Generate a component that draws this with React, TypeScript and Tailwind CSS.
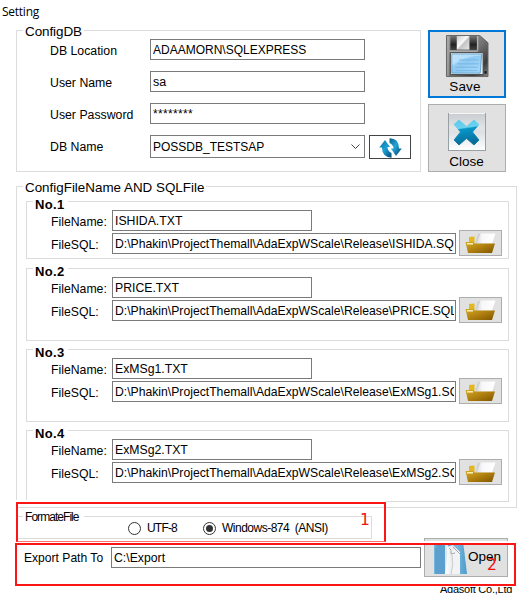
import type { ReactNode } from "react";

type GroupProps = { title: ReactNode; className: string; titleClass: string; children: ReactNode };

function Group({ title, className, titleClass, children }: GroupProps) {
  return (
    <section className={`relative border border-[#dcdcdc] ${className}`}>
      <h2 className={`absolute bg-white whitespace-nowrap ${titleClass}`}>{title}</h2>
      {children}
    </section>
  );
}

function Field({ value, className }: { value: string; className: string }) {
  return (
    <div className={`flex h-[21px] shrink-0 items-center border border-[#7a7a7a] bg-white pl-[2px] pr-[1px] pt-[2px] ${className}`}>
      <span className="block w-full overflow-hidden whitespace-pre leading-[17px]">{value}</span>
    </div>
  );
}

function FloppyIcon() {
  return (
    <svg width="44" height="44" viewBox="0 0 44 44">
      <defs>
        <linearGradient id="body" x1="0" y1="0" x2="1" y2="1">
          <stop offset="0" stopColor="#9b9b9b" />
          <stop offset=".5" stopColor="#777" />
          <stop offset=".8" stopColor="#3c3c3c" />
          <stop offset="1" stopColor="#858585" />
        </linearGradient>
        <linearGradient id="shutter" x1="0" y1="0" x2="1" y2="1">
          <stop offset="0" stopColor="#c9c9c9" />
          <stop offset=".45" stopColor="#fafafa" />
          <stop offset=".55" stopColor="#c4c4c4" />
          <stop offset="1" stopColor="#e6e6e6" />
        </linearGradient>
        <linearGradient id="dark" x1="0" y1="0" x2="0" y2="1">
          <stop offset="0" stopColor="#777" />
          <stop offset=".6" stopColor="#222" />
          <stop offset="1" stopColor="#444" />
        </linearGradient>
        <linearGradient id="label" x1="0" y1="0" x2="1" y2="1">
          <stop offset="0" stopColor="#b9e0fa" />
          <stop offset=".45" stopColor="#8fc9f2" />
          <stop offset="1" stopColor="#a9dbfb" />
        </linearGradient>
      </defs>
      <path d="M1 .5H35L43.5 8V42.5H1Z" fill="url(#body)" stroke="#666" />
      <path d="M2.500 1V42" stroke="#b5b5b5" />
      <path d="M5 1H32V15.500H5Z" fill="url(#dark)" />
      <path d="M11.500 1H24.500V15H11.500Z" fill="url(#shutter)" />
      <path d="M33 1V16M4 16.500H33" stroke="#c8c8c8" />
      <path d="M5 18H38.500V40.500H5Z" fill="#e8eef2" stroke="#474747" />
      <path d="M6.500 19.500H37L35.500 39H6.500Z" fill="url(#label)" stroke="#5093c3" strokeWidth=".8" />
      <path d="M7 31Q17 22 36.500 21V20H7Z" fill="#c2e5fb" opacity=".7" />
      <path d="M14 25.500H34M12 29.500H34M10 33H33M10 36.500H33" stroke="#6fb2e0" strokeWidth="1" opacity=".8" />
      <path d="M40 37h2v2.500h-2Z" fill="#111" />
    </svg>
  );
}

function CloseIcon() {
  return (
    <svg width="38" height="39" viewBox="0 0 38 39">
      <defs>
        <linearGradient id="tile" x1="0" y1="0" x2="0" y2="1">
          <stop offset="0" stopColor="#c9cdd1" />
          <stop offset=".4" stopColor="#e2e5e7" />
          <stop offset=".5" stopColor="#dce0e3" />
          <stop offset="1" stopColor="#fff" />
        </linearGradient>
        <linearGradient id="cross" gradientUnits="userSpaceOnUse" x1="0" y1="7" x2="4" y2="34">
          <stop offset="0" stopColor="#59c6e9" />
          <stop offset=".4" stopColor="#6dd1ef" />
          <stop offset=".45" stopColor="#0796c9" />
          <stop offset="1" stopColor="#086c99" />
        </linearGradient>
      </defs>
      <rect x=".5" y="1.500" width="37" height="37" fill="url(#tile)" stroke="#98a0a5" />
      <path d="M1 1.500H37" stroke="#f6f6f6" />
      <path
        d="M11 8L18.500 14.500L26 8L31 12.500L24.500 20L31 28L26 33L18.500 26.500L11 33L6 28L12.500 20L6 12.500Z"
        fill="url(#cross)"
        stroke="url(#cross)"
        strokeWidth=".8"
        strokeLinejoin="round"
      />
    </svg>
  );
}

function RefreshIcon() {
  return (
    <svg width="23" height="20" viewBox="0 0 23 20">
      <defs>
        <linearGradient id="arrowL" x1="0" y1="0" x2="1" y2="1">
          <stop offset="0" stopColor="#0b6fa3" />
          <stop offset=".5" stopColor="#19a0d5" />
          <stop offset="1" stopColor="#07466d" />
        </linearGradient>
        <linearGradient id="arrowR" x1="0" y1="0" x2="1" y2="1">
          <stop offset="0" stopColor="#0e5d88" />
          <stop offset=".45" stopColor="#21a5d9" />
          <stop offset="1" stopColor="#083b5d" />
        </linearGradient>
      </defs>
      <path d="M6 2L11 9H8.500Q8.500 13 12.500 15V19.800Q3 19 3 9.500H.3Z" fill="url(#arrowL)" />
      <path d="M10.500 .2Q20 0 20 10.500H22.800L17 18L12 10.500H14.500Q14.500 7 10.500 5Z" fill="url(#arrowR)" />
    </svg>
  );
}

function FolderIcon() {
  return (
    <svg width="31" height="21" viewBox="0 0 31 21">
      <defs>
        <linearGradient id="folder" x1="0" y1="0" x2="1" y2="1">
          <stop offset="0" stopColor="#d5aa23" />
          <stop offset=".45" stopColor="#b38411" />
          <stop offset="1" stopColor="#805400" />
        </linearGradient>
        <linearGradient id="paper" x1="0" y1="0" x2="1" y2="0">
          <stop offset="0" stopColor="#d5d7da" />
          <stop offset=".3" stopColor="#f8f8fa" />
          <stop offset="1" stopColor="#fff" />
        </linearGradient>
      </defs>
      <path d="M4 4L9.500 3.500V11H4Z" fill="#e3b71f" />
      <path d="M10 10L13 .8L16.500 1L14 11H10Z" fill="#cfd1d4" />
      <path d="M11.500 10.500L15.500 .5H30.500L27 10.500Z" fill="url(#paper)" />
      <path d="M.5 9H8L9.500 10.500H30L27 20H3Z" fill="url(#folder)" />
      <path d="M2 10.800H8" stroke="#fff5c6" strokeWidth="1.400" />
    </svg>
  );
}

function OpenIcon() {
  return (
    <svg width="33" height="33" viewBox="0 0 33 33">
      <defs>
        <linearGradient id="openBlue" x1="0" y1="0" x2="1" y2="0">
          <stop offset="0" stopColor="#79b9df" />
          <stop offset=".15" stopColor="#4f97c8" />
          <stop offset=".7" stopColor="#78b6dc" />
          <stop offset="1" stopColor="#4a9bcc" />
        </linearGradient>
        <linearGradient id="sheet" x1="0" y1="0" x2="1" y2="0">
          <stop offset="0" stopColor="#fff" />
          <stop offset=".55" stopColor="#e7e9eb" />
          <stop offset="1" stopColor="#fff" />
        </linearGradient>
      </defs>
      <path d="M0 0H29L30 7L33 32H0Z" fill="url(#openBlue)" />
      <path d="M1 6L11 2V32H1Z" fill="#5a9fcd" />
      <path d="M11 0H14V32H11Z" fill="#dbe7ee" />
      <path d="M13 5L19 3L26 10V32H11Q14 16 13 5Z" fill="url(#sheet)" />
      <path d="M16 7Q23 7 26 13V32H17Q21 19 16 7Z" fill="#f2f3f4" />
      <path d="M15 6Q18 7 17 12L21 11M19 5L26 12" stroke="#a7a7a7" fill="none" />
      <path d="M18 13Q20 23 17 32" stroke="#c9cdd0" fill="none" />
    </svg>
  );
}

const credentials = [
  { label: "DB Location", value: "ADAAMORN\\SQLEXPRESS", text: "text-[12px]" },
  { label: "User Name", value: "sa", text: "text-[12.5px]" },
  { label: "User Password", value: "********", text: "text-[12px] tracking-[0.33px]" },
];

const root = "D:\\Phakin\\ProjectThemall\\AdaExpWScale\\Release\\";

const files = [
  { no: "No.1", name: "ISHIDA.TXT", sql: root + "ISHIDA.SQL", box: "h-[58px] mb-[9px]" },
  { no: "No.2", name: "PRICE.TXT", sql: root + "PRICE.SQL", box: "h-[73px] mb-[8px]" },
  { no: "No.3", name: "ExMSg1.TXT", sql: root + "ExMSg1.SQL", box: "h-[73px] mb-[8px]" },
  { no: "No.4", name: "ExMSg2.TXT", sql: root + "ExMSg2.SQL", box: "h-[72px]" },
];

function Radio({ checked }: { checked?: boolean }) {
  return (
    <span className="flex size-[13px] items-center justify-center rounded-full border border-[#333] bg-white">
      {checked && <span className="size-[7px] rounded-full bg-[#333]" />}
    </span>
  );
}

export default function App() {
  return (
    <main className="relative h-[597px] w-[519px] overflow-hidden bg-white font-['Liberation_Sans',Arial,sans-serif] text-[12.25px] text-black">
      <header className="h-[30px] pl-[2px] pt-[3px] font-['Open_Sans',sans-serif] text-[12px] leading-[17px] tracking-[-0.25px]">
        Setting
      </header>

      <div className="flex pl-[16px]">
        <Group title="ConfigDB" className="h-[142px] w-[405px] pt-[8px]" titleClass="left-[6px] top-[-8px] h-[17px] pl-[2px] pr-[2px] text-[13.5px] leading-[17px] tracking-[-0.1px]">
          <div className="flex flex-col gap-[11px]">
            {credentials.map((c) => (
              <div key={c.label} className="flex h-[21px] items-center pl-[33px]">
                <span className="w-[100px] pt-[3px] text-[12.3px]">{c.label}</span>
                <Field value={c.value} className={`w-[215px] ${c.text}`} />
              </div>
            ))}
            <div className="flex h-[24px] items-start pl-[33px]">
              <span className="w-[100px] pt-[3px] text-[12.3px] leading-[18px]">DB Name</span>
              <div className="flex h-[23px] w-[215px] items-center justify-between border border-[#7a7a7a] pl-[2px] pr-[4px] text-[12px]">
                <span>POSSDB_TESTSAP</span>
                <svg width="9" height="6" viewBox="0 0 9 6" fill="none" stroke="#444">
                  <path d="M.5 .5L4.500 4.500L8.500 .5" />
                </svg>
              </div>
              <button className="ml-[4px] flex h-[24px] w-[42px] items-center justify-center border border-[#444] bg-white pt-[1px]">
                <RefreshIcon />
              </button>
            </div>
          </div>
        </Group>

        <div className="ml-[7px] flex flex-col gap-[6px] text-[13.5px]">
          <button className="flex h-[68px] w-[78px] flex-col items-center border-2 border-[#0078d7] bg-[#e1e1e1] pt-[3px]">
            <FloppyIcon />
            <span className="-ml-[4px] leading-[18px] tracking-[0.2px]">Save</span>
          </button>
          <button className="flex h-[68px] w-[78px] flex-col items-center border border-[#adadad] bg-[#e1e1e1] pt-[7px]">
            <CloseIcon />
            <span className="-ml-[1px] mt-[2px] leading-[18px]">Close</span>
          </button>
        </div>
      </div>

      <div className="pl-[16px] pt-[14px]">
        <Group
          title="ConfigFileName AND SQLFile"
          className="h-[322px] w-[501px] pl-[9px] pt-[14px]"
          titleClass="left-[6px] top-[-8px] pl-[2px] pr-[2px] text-[13.4px] leading-[17px]"
        >
          {files.map((f) => (
            <Group key={f.no} title={f.no} className={`w-[483px] pt-[8px] ${f.box}`} titleClass="left-[6px] top-[-4px] pl-[2px] pr-[3px] text-[13px] font-bold leading-[13px] tracking-[0.35px]">
              <div className="flex items-center pl-[24px]">
                <span className="w-[61px] pt-[3px]">FileName:</span>
                <Field value={f.name} className="w-[200px]" />
              </div>
              <div className="mt-[-1px] flex items-start pl-[24px]">
                <span className="w-[61px] pt-[6px] leading-[18px]">FileSQL:</span>
                <Field value={f.sql} className="mt-[3px] w-[344px] text-[12.2px]" />
                <button className="ml-[3px] flex h-[26px] w-[43px] shrink-0 items-center justify-center border border-[#adadad] bg-[#e1e1e1]">
                  <FolderIcon />
                </button>
              </div>
            </Group>
          ))}
        </Group>
      </div>

      <div className="h-[30px] pl-[18px] pt-[8px]">
        <Group title="FormateFile" className="h-[23px] w-[354px] border-l-0" titleClass="left-[5px] top-[-8px] pl-[2px] pr-[5px] text-[12px] leading-[17px] tracking-[-0.95px]">
          <div className="flex items-center pl-[110px] pt-[4px] text-[12px]">
            <Radio />
            <span className="ml-[6px] w-[56px] leading-[14px] tracking-[-0.8px]">UTF-8</span>
            <Radio checked />
            <span className="ml-[6px] whitespace-pre leading-[14px] tracking-[-0.5px]">{"Windows-874  (ANSI)"}</span>
          </div>
        </Group>
      </div>

      <div className="flex h-[39px] items-start pl-[24px]">
        <span className="w-[87px] pt-[11px] text-[12.1px] leading-[18px]">Export Path To</span>
        <Field value="C:\Export" className="mt-[9px] w-[310px]" />
        <button className="ml-[3px] flex h-[39px] w-[84px] items-center border border-[#adadad] bg-[#e1e1e1] pl-[9px] pt-[1px] text-[13.5px]">
          <OpenIcon />
          <span className="ml-[1px] mt-[-1px]">Open</span>
        </button>
      </div>

      <footer className="mt-[10px] h-[10px] overflow-hidden pl-[440px] text-[11px] tracking-[-0.25px]">
        <div className="mt-[-5px] whitespace-nowrap leading-[14px]">Adasoft Co.,Ltd</div>
      </footer>

      {/* numbered callouts laid over the form */}
      <div className="absolute left-[16px] top-[500px] h-[42px] w-[2px] bg-white" />
      <div className="absolute left-[16px] top-[500px] h-[2px] w-[370px] bg-white" />
      <div className="absolute left-[424px] top-[541px] h-[2px] w-[84px] bg-white" />
      <div className="absolute left-[16px] top-[502px] h-[40px] w-[370px] border-2 border-b border-[#fb1515] border-b-[#ff7070] font-['DejaVu_Sans',sans-serif] text-[15.5px] leading-[16px] text-[#f01010]">
        <span className="absolute left-[342px] top-[8px]">1</span>
      </div>
      <div className="absolute left-[15px] top-[543px] h-[43px] w-[501px] border-2 border-[#fb1515] font-['DejaVu_Sans',sans-serif] text-[15.5px] leading-[16px] text-[#f01010]">
        <span className="absolute left-[470px] top-[12px]">2</span>
      </div>
    </main>
  );
}
